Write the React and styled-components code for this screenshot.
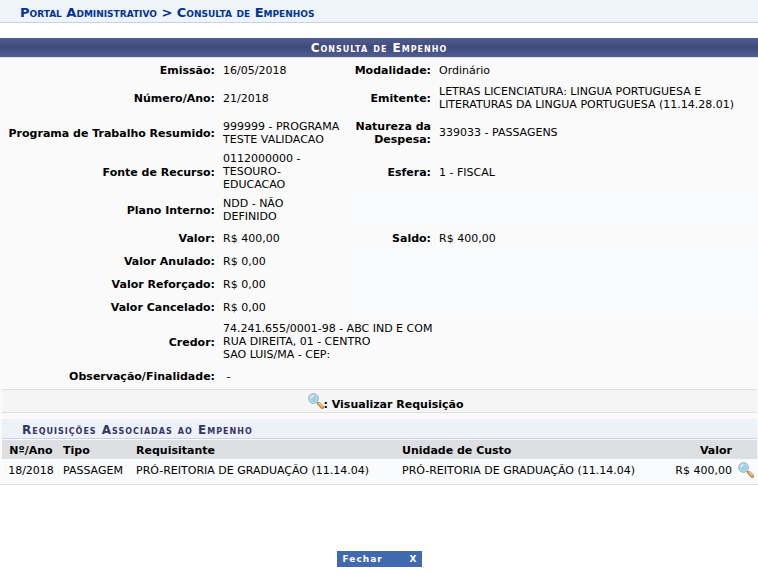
import React from 'react';
import styled, { createGlobalStyle } from 'styled-components';

const GlobalStyle = createGlobalStyle`
  * {
    box-sizing: border-box;
  }

  body {
    margin: 0;
    background: #fff;
    color: #000;
    font-family: Verdana, 'DejaVu Sans', sans-serif;
    font-size: 11px;
    line-height: 13px;
  }
`;

const Breadcrumb = styled.h2`
  margin: 0 0 15px;
  padding: 6px 20px 3px;
  border-bottom: 1px solid #c4d2eb;
  background: #eff3fa;
  color: #003395;
  font-size: 13px;
  font-variant: small-caps;
  line-height: 13px;
`;

const Panel = styled.section`
  border-bottom: 1px solid #dedfe3;
  background: #fafafa;
`;

const PanelTitle = styled.h3`
  margin: 0;
  padding: 4px 0 2px;
  border-bottom: 1px solid #dfe0ec;
  background: linear-gradient(#525d90, #404a7c 50%, #525d90);
  color: #fff;
  font-size: 12px;
  font-variant: small-caps;
  letter-spacing: 1px;
  line-height: 13px;
  text-align: center;
`;

const DetailsTable = styled.table`
  width: 100%;
  table-layout: fixed;
  border-collapse: collapse;
`;

const Col = styled.col`
  width: ${({ $width }) => $width};
`;

const Label = styled.th`
  padding: 6px 4px 4px;
  text-align: right;
`;

const Value = styled.td`
  padding: ${({ $tight }) => ($tight ? '2px 4px' : '4px 4px 3px')};
  white-space: pre-line;
`;

const Blank = styled.td`
  background: #f9fbfd;
`;

const Inset = styled.div`
  padding: 2px 1px 0 2px;
`;

const Legend = styled.div`
  display: flex;
  align-items: center;
  justify-content: center;
  height: 24px;
  margin-bottom: 6px;
  padding-left: 12px;
  border: solid #dedfe3;
  border-width: 1px 0;
  background: #f5f5f5;
  font-weight: bold;
`;

const LegendText = styled.span`
  padding-top: 6px;
`;

const RequestsTable = styled.table`
  width: 100%;
  table-layout: fixed;
  border-collapse: collapse;
  background: #f9fbfd;

  caption {
    padding: 5px 20px 1px;
    margin-bottom: 1px;
    border-bottom: 1px solid #c4d2eb;
    background: #edf1f8;
    color: #333366;
    font-size: 12px;
    font-variant: small-caps;
    font-weight: bold;
    letter-spacing: 1px;
    text-align: left;
  }

  thead {
    background: #dedfe3;
  }
`;

const Cell = styled.td`
  height: ${({ $head }) => ($head ? '19px' : '25px')};
  padding: ${({ $head }) => ($head ? '2px 3px 0' : '0 3px 3px')};
  text-align: ${({ $align }) => $align || 'left'};
  white-space: nowrap;
`;

const IconLink = styled.a`
  display: block;
  height: 16px;
`;

const Footer = styled.footer`
  display: flex;
  justify-content: center;
  padding: 66px 0 8px;
`;

const CloseButton = styled.button`
  display: flex;
  align-items: center;
  justify-content: space-between;
  width: 85px;
  height: 16px;
  padding: 0 4px 0 6px;
  border: 0;
  background: #4169ae;
  color: #fff;
  font-family: inherit;
  font-size: 9px;
  font-weight: bold;
  letter-spacing: 1px;
  cursor: pointer;
`;

const Magnifier = () => (
  <svg width="16" height="16" viewBox="0 0 16 16" aria-hidden="true">
    <path d="M9 9l1.8 1.8" stroke="#8d99a6" strokeWidth="1.8" />
    <path d="M11 10.8l3.4 3.4" stroke="#a08672" strokeWidth="3.6" strokeLinecap="round" />
    <path d="M11.2 10.6l3 3" stroke="#f8a04a" strokeWidth="2.6" strokeLinecap="round" />
    <path d="M11.4 10.2l2.8 2.8" stroke="#fdd6a4" strokeWidth="0.9" />
    <circle cx="5.5" cy="5.5" r="4.8" fill="#9fd0ea" stroke="#93a6b5" strokeWidth="1" />
    <circle cx="5.5" cy="5.5" r="3.9" fill="none" stroke="#c3dfef" strokeWidth="0.8" />
    <path d="M3 5.6a2.6 2.6 0 0 1 2.6-2.6" stroke="#e4f4fb" strokeWidth="1.4" fill="none" />
  </svg>
);

const details = [
  [['Emissão:', '16/05/2018'], ['Modalidade:', 'Ordinário']],
  [
    ['Número/Ano:', '21/2018'],
    ['Emitente:', 'LETRAS LICENCIATURA: LINGUA PORTUGUESA E\nLITERATURAS DA LINGUA PORTUGUESA (11.14.28.01)'],
  ],
  [
    ['Programa de Trabalho Resumido:', '999999 - PROGRAMA\nTESTE VALIDACAO'],
    ['Natureza da Despesa:', '339033 - PASSAGENS'],
  ],
  [['Fonte de Recurso:', '0112000000 -\nTESOURO-\nEDUCACAO', true], ['Esfera:', '1 - FISCAL']],
  [['Plano Interno:', 'NDD - NÃO\nDEFINIDO']],
  [['Valor:', 'R$ 400,00'], ['Saldo:', 'R$ 400,00']],
  [['Valor Anulado:', 'R$ 0,00']],
  [['Valor Reforçado:', 'R$ 0,00']],
  [['Valor Cancelado:', 'R$ 0,00']],
];

const App = () => (
  <>
    <GlobalStyle />
    <Breadcrumb>Portal Administrativo &gt; Consulta de Empenhos</Breadcrumb>
    <Panel>
      <PanelTitle>Consulta de Empenho</PanelTitle>
      <DetailsTable>
        <colgroup>
          <Col $width="219px" />
          <Col $width="131px" />
          <Col $width="85px" />
          <Col />
        </colgroup>
        <tbody>
          {details.map((fields) => (
            <tr key={fields[0][0]}>
              {fields.map(([label, value, tight]) => (
                <React.Fragment key={label}>
                  <Label scope="row">{label}</Label>
                  <Value $tight={tight}>{value}</Value>
                </React.Fragment>
              ))}
              {fields.length === 1 && <Blank colSpan={2} />}
            </tr>
          ))}
          <tr>
            <Label scope="row">Credor:</Label>
            <Value colSpan={3}>
              74.241.655/0001-98 - ABC IND E COM
              <br />
              RUA DIREITA, 01 - CENTRO
              <br />
              SAO LUIS/MA - CEP:
            </Value>
          </tr>
          <tr>
            <Label scope="row">Observação/Finalidade:</Label>
            <Value colSpan={3}>&nbsp;-</Value>
          </tr>
        </tbody>
      </DetailsTable>
      <Inset>
        <Legend>
          <Magnifier />
          <LegendText>: Visualizar Requisição</LegendText>
        </Legend>
        <RequestsTable>
          <caption>Requisições Associadas ao Empenho</caption>
          <colgroup>
            <Col $width="58px" />
            <Col $width="73px" />
            <Col $width="266px" />
            <Col />
            <Col $width="70px" />
            <Col $width="22px" />
          </colgroup>
          <thead>
            <tr>
              <Cell as="th" $head $align="center">Nº/Ano</Cell>
              <Cell as="th" $head>Tipo</Cell>
              <Cell as="th" $head>Requisitante</Cell>
              <Cell as="th" $head>Unidade de Custo</Cell>
              <Cell as="th" $head $align="right">Valor</Cell>
              <Cell $head />
            </tr>
          </thead>
          <tbody>
            <tr>
              <Cell $align="center">18/2018</Cell>
              <Cell>PASSAGEM</Cell>
              <Cell>PRÓ-REITORIA DE GRADUAÇÃO (11.14.04)</Cell>
              <Cell>PRÓ-REITORIA DE GRADUAÇÃO (11.14.04)</Cell>
              <Cell $align="right">R$ 400,00</Cell>
              <Cell>
                <IconLink href="#requisicao" aria-label="Visualizar Requisição">
                  <Magnifier />
                </IconLink>
              </Cell>
            </tr>
          </tbody>
        </RequestsTable>
      </Inset>
    </Panel>
    <Footer>
      <CloseButton type="button">
        <span>Fechar</span>
        <span>X</span>
      </CloseButton>
    </Footer>
  </>
);

export default App;
